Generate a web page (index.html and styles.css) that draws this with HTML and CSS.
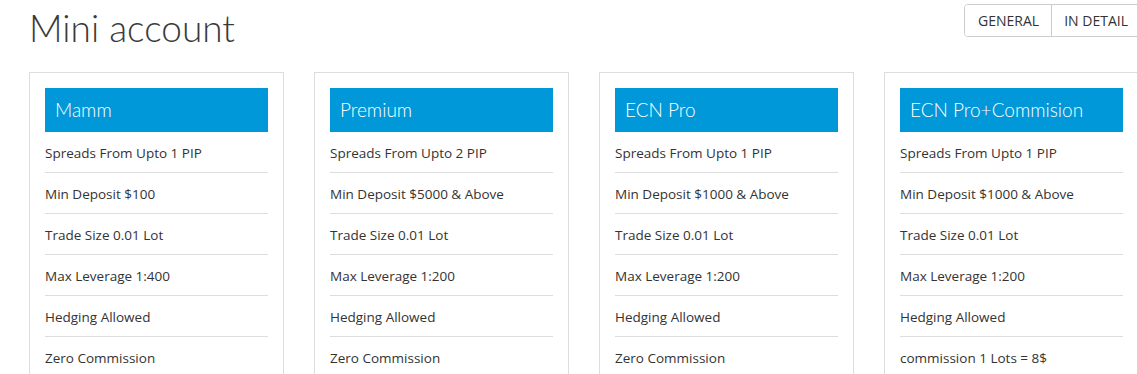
FILE: index.html
```html
<!DOCTYPE html>
<html>
<head>
<meta charset="utf-8">
<link rel="stylesheet" href="styles.css">
</head>
<body>
<div class="page">
  <div class="top">
    <h1 class="title">Mini account</h1>
    <div class="toggle">
      <button class="tbtn">GENERAL</button>
      <button class="tbtn">IN DETAIL</button>
    </div>
  </div>
  <div class="cards">
    <div class="card">
      <div class="card-head">Mamm</div>
      <ul class="rows">
        <li>Spreads From Upto 1 PIP</li>
        <li>Min Deposit $100</li>
        <li>Trade Size 0.01 Lot</li>
        <li>Max Leverage 1:400</li>
        <li>Hedging Allowed</li>
        <li>Zero Commission</li>
      </ul>
    </div>
    <div class="card">
      <div class="card-head">Premium</div>
      <ul class="rows">
        <li>Spreads From Upto 2 PIP</li>
        <li>Min Deposit $5000 &amp; Above</li>
        <li>Trade Size 0.01 Lot</li>
        <li>Max Leverage 1:200</li>
        <li>Hedging Allowed</li>
        <li>Zero Commission</li>
      </ul>
    </div>
    <div class="card">
      <div class="card-head">ECN Pro</div>
      <ul class="rows">
        <li>Spreads From Upto 1 PIP</li>
        <li>Min Deposit $1000 &amp; Above</li>
        <li>Trade Size 0.01 Lot</li>
        <li>Max Leverage 1:200</li>
        <li>Hedging Allowed</li>
        <li>Zero Commission</li>
      </ul>
    </div>
    <div class="card">
      <div class="card-head">ECN Pro+Commision</div>
      <ul class="rows">
        <li>Spreads From Upto 1 PIP</li>
        <li>Min Deposit $1000 &amp; Above</li>
        <li>Trade Size 0.01 Lot</li>
        <li>Max Leverage 1:200</li>
        <li>Hedging Allowed</li>
        <li>commission 1 Lots = 8$</li>
      </ul>
    </div>
  </div>
</div>
</body>
</html>
```

FILE: styles.css
```css
html, body {
  margin: 0;
  padding: 0;
  background: #fff;
  overflow: hidden;
}
.page {
  width: 1170px;
  padding-left: 29px;
  font-family: "Open Sans", sans-serif;
  color: #333;
}
.top {
  display: flex;
  justify-content: space-between;
  align-items: flex-start;
  width: 1112px;
  height: 72px;
}
.title {
  margin: 0;
  padding-top: 6px;
  padding-left: 0;
  font-family: Lato, sans-serif;
  font-weight: 300;
  font-size: 37px;
  line-height: 44px;
  color: #3a3a3a;
}
.toggle {
  display: flex;
  margin-top: 4px;
  border: 1px solid #ccc;
  border-radius: 4px;
  overflow: hidden;
}
.tbtn {
  background: #fff;
  border: 0;
  height: 31px;
  padding: 0 12px 0 13px;
  font-family: "Open Sans", sans-serif;
  font-size: 14px;
  color: #333;
}
.tbtn + .tbtn {
  border-left: 1px solid #ccc;
  padding-left: 12px;
}
.cards {
  display: flex;
  gap: 30px;
}
.card {
  flex: 0 0 255px;
  box-sizing: border-box;
  border: 1px solid #ddd;
  padding: 15px 15px 0;
}
.card-head {
  background: #0098d9;
  color: #fff;
  height: 44px;
  line-height: 44px;
  padding-left: 10px;
  font-family: Lato, sans-serif;
  font-weight: 300;
  font-size: 19px;
}
.rows {
  list-style: none;
  margin: 0;
  padding: 0;
}
.rows li {
  height: 40px;
  line-height: 42px;
  border-bottom: 1px solid #ddd;
  font-size: 13.5px;
  color: #333;
}
```
